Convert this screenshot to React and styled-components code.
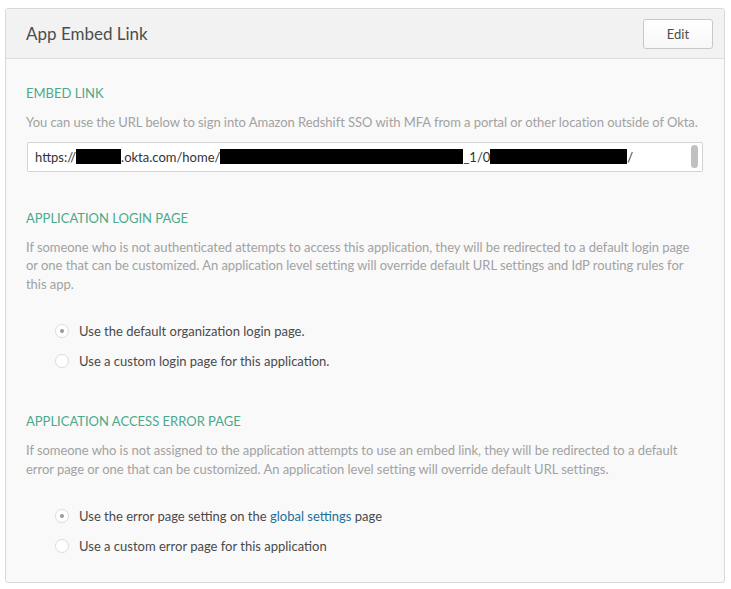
import styled, { createGlobalStyle } from 'styled-components';

const GlobalStyle = createGlobalStyle`
  html, body {
    margin: 0;
    padding: 0;
    background: #ffffff;
  }
  body {
    font-family: Lato, "Liberation Sans", sans-serif;
  }
`

const Page = styled.div`
  padding: 8px 6px 8px 5px;
`

const Panel = styled.section`
  border: 1px solid #d9d9d9;
  border-radius: 3px;
  background: #f9f9f9;
`

const Header = styled.header`
  display: flex;
  align-items: center;
  justify-content: space-between;
  height: 49px;
  padding: 0 11px 0 20px;
  background: #f2f2f2;
  border-bottom: 1px solid #dcdcdc;
  border-radius: 3px 3px 0 0;
`

const Title = styled.h2`
  margin: 0;
  font-size: 17px;
  font-weight: 400;
  color: #4d4d4d;
`

const Button = styled.button`
  width: 70px;
  height: 30px;
  border: 1px solid #c8c8c8;
  border-radius: 3px;
  background: linear-gradient(#ffffff, #f7f7f7);
  font-family: inherit;
  font-size: 13px;
  color: #4d4d4d;
`

const Body = styled.div`
  padding: 25px 21px 22px 20px;
`

const Section = styled.div`
  margin-bottom: 37px;
  &:last-child {
    margin-bottom: 0;
  }
`

const Heading = styled.h3`
  margin: 0 0 11px;
  font-size: 13px;
  line-height: 18px;
  font-weight: 400;
  color: #4ba98b;
  text-transform: uppercase;
`

const Text = styled.p`
  margin: 0;
  font-size: 13px;
  line-height: 18.5px;
  letter-spacing: -0.05px;
  color: #a2a2a2;
`

const UrlBox = styled.div`
  display: flex;
  align-items: center;
  height: 28px;
  margin-top: 10px;
  margin-left: 1px;
  padding: 0 4px 0 7px;
  border: 1px solid #d3d3d3;
  border-radius: 2px;
  background: #ffffff;
  font-size: 13px;
  color: #333;
`

const UrlText = styled.div`
  flex: 1;
  display: flex;
  align-items: center;
  white-space: nowrap;
`

const Redact = styled.span`
  display: inline-block;
  width: ${p => p.$w}px;
  height: 15px;
  background: #000;
`

const Scroll = styled.div`
  width: 7px;
  height: 23px;
  border-radius: 4px;
  background: #c1c1c1;
`

const Options = styled.div`
  display: flex;
  flex-direction: column;
  gap: 12px;
  padding: 29px 0 5px 29px;
`

const Option = styled.label`
  display: flex;
  align-items: center;
  gap: 10px;
  height: 18px;
  font-size: 13px;
  color: #4a4a4a;
`

const Radio = styled.span`
  display: flex;
  flex-shrink: 0;
  align-items: center;
  justify-content: center;
  width: 12px;
  height: 12px;
  border: 1px solid #dcdcdc;
  border-radius: 50%;
  background: #fff;
  &::after {
    content: '';
    display: ${p => (p.$on ? 'block' : 'none')};
    width: 4px;
    height: 4px;
    border-radius: 50%;
    background: #9a9a9a;
  }
`

const Link = styled.a`
  color: #1f6f98;
  text-decoration: none;
`

const App = () => {
  return (
    <Page>
      <GlobalStyle />
      <Panel>
        <Header>
          <Title>App Embed Link</Title>
          <Button>Edit</Button>
        </Header>
        <Body>
          <Section>
            <Heading>Embed Link</Heading>
            <Text>You can use the URL below to sign into Amazon Redshift SSO with MFA from a portal or other location outside of Okta.</Text>
            <UrlBox>
              <UrlText>
                https://<Redact $w={45} />.okta.com/home/<Redact $w={243} />_1/0<Redact $w={137} />/
              </UrlText>
              <Scroll />
            </UrlBox>
          </Section>
          <Section>
            <Heading>Application Login Page</Heading>
            <Text>If someone who is not authenticated attempts to access this application, they will be redirected to a default login page or one that can be customized. An application level setting will override default URL settings and IdP routing rules for this app.</Text>
            <Options>
              <Option><Radio $on /><span>Use the default organization login page.</span></Option>
              <Option><Radio /><span>Use a custom login page for this application.</span></Option>
            </Options>
          </Section>
          <Section>
            <Heading>Application Access Error Page</Heading>
            <Text>If someone who is not assigned to the application attempts to use an embed link, they will be redirected to a default error page or one that can be customized. An application level setting will override default URL settings.</Text>
            <Options>
              <Option><Radio $on /><span>Use the error page setting on the <Link href="#">global settings</Link> page</span></Option>
              <Option><Radio /><span>Use a custom error page for this application</span></Option>
            </Options>
          </Section>
        </Body>
      </Panel>
    </Page>
  )
}

export default App;
